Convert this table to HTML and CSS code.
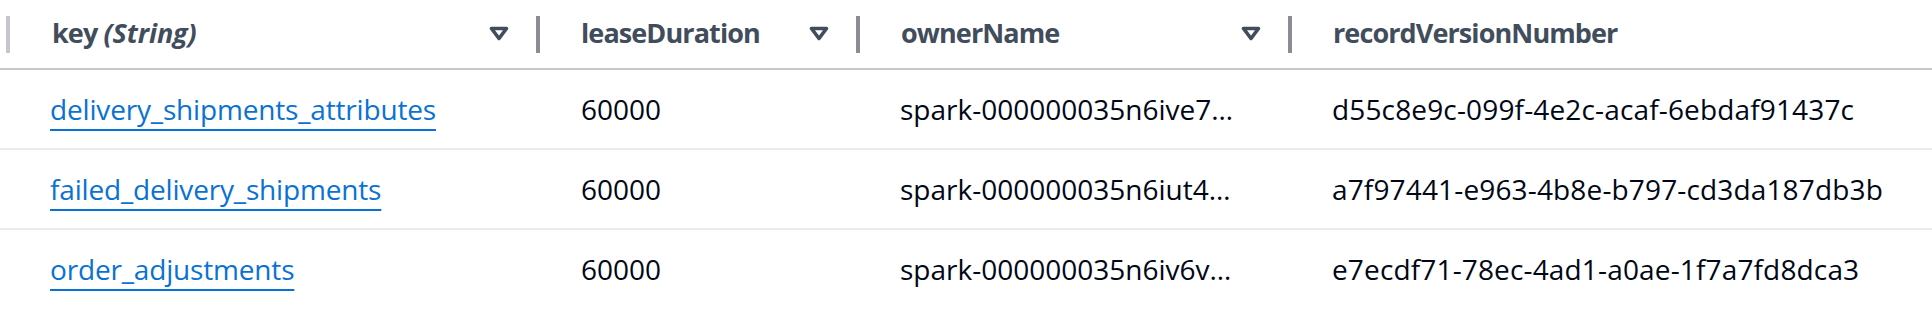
FILE: index.html
```html
<!DOCTYPE html>
<html lang="en">
<head>
<meta charset="utf-8">
<title>Items</title>
<link rel="stylesheet" href="styles.css">
</head>
<body>
<table class="grid">
  <colgroup>
    <col class="c1"><col class="c2"><col class="c3"><col class="c4">
  </colgroup>
  <thead>
    <tr>
      <th class="h1">
        <div class="th">
          <span class="rule rule-light"></span>
          <span class="label">key <em>(String)</em></span>
          <svg class="caret" viewBox="0 0 20 16" aria-hidden="true"><path d="M2.5 2.5H17.5L10 12.5Z"/></svg>
        </div>
      </th>
      <th>
        <div class="th">
          <span class="rule"></span>
          <span class="label">leaseDuration</span>
          <svg class="caret" viewBox="0 0 20 16" aria-hidden="true"><path d="M2.5 2.5H17.5L10 12.5Z"/></svg>
        </div>
      </th>
      <th>
        <div class="th">
          <span class="rule"></span>
          <span class="label">ownerName</span>
          <svg class="caret" viewBox="0 0 20 16" aria-hidden="true"><path d="M2.5 2.5H17.5L10 12.5Z"/></svg>
        </div>
      </th>
      <th>
        <div class="th">
          <span class="rule"></span>
          <span class="label">recordVersionNumber</span>
        </div>
      </th>
    </tr>
  </thead>
  <tbody>
    <tr>
      <td class="d1"><a href="#">delivery_shipments_attributes</a></td>
      <td class="d2">60000</td>
      <td class="d3"><span class="trunc">spark-000000035n6ive7…</span></td>
      <td class="d4">d55c8e9c-099f-4e2c-acaf-6ebdaf91437c</td>
    </tr>
    <tr>
      <td class="d1"><a href="#">failed_delivery_shipments</a></td>
      <td class="d2">60000</td>
      <td class="d3"><span class="trunc">spark-000000035n6iut4…</span></td>
      <td class="d4">a7f97441-e963-4b8e-b797-cd3da187db3b</td>
    </tr>
    <tr class="last">
      <td class="d1"><a href="#">order_adjustments</a></td>
      <td class="d2">60000</td>
      <td class="d3"><span class="trunc">spark-000000035n6iv6v…</span></td>
      <td class="d4">e7ecdf71-78ec-4ad1-a0ae-1f7a7fd8dca3</td>
    </tr>
  </tbody>
</table>
</body>
</html>
```

FILE: styles.css
```css
html, body {
  margin: 0;
  padding: 0;
  background: #ffffff;
}

body {
  font-family: "Open Sans", "Noto Sans", "Liberation Sans", sans-serif;
  color: #000716;
}

.grid {
  width: 1932px;
  table-layout: fixed;
  border-collapse: collapse;
  border-spacing: 0;
}

.c1 { width: 536px; }
.c2 { width: 320px; }
.c3 { width: 432px; }
.c4 { width: auto; }

th {
  padding: 0;
  height: 68px;
  border-bottom: 2px solid #c6c6cd;
  text-align: left;
  vertical-align: middle;
}

.th {
  display: flex;
  align-items: center;
  height: 68px;
  font-size: 27px;
  font-weight: 700;
  letter-spacing: -0.9px;
  color: #414d5c;
}

.h1 .th {
  padding-left: 6px;
}

.rule {
  flex: none;
  width: 4px;
  height: 37px;
  background: #8c8c94;
}

.rule-light {
  background: #c6c6cd;
}

.label {
  margin-left: 41px;
  margin-bottom: 3px;
  white-space: nowrap;
}

.h1 .label {
  margin-left: 42px;
}

.label em {
  font-style: italic;
  letter-spacing: -0.1px;
}

.caret {
  flex: none;
  width: 20px;
  height: 16px;
  margin-left: auto;
  margin-right: 27px;
  fill: none;
  stroke: #414d5c;
  stroke-width: 3.6;
  stroke-linejoin: round;
}

td {
  height: 78px;
  padding: 0 44px 0 44px;
  border-bottom: 2px solid #e9ebed;
  font-size: 28px;
  color: #000716;
  white-space: nowrap;
  overflow: hidden;
  vertical-align: middle;
}

tr.last td {
  border-bottom: none;
}

td.d1 { padding-left: 50px; }
td.d2 { padding-left: 45px; }
td.d3 { padding-left: 44px; }
td.d4 { padding-left: 44px; letter-spacing: 0.15px; }

td a {
  color: #0972d3;
  letter-spacing: -0.17px;
  text-decoration: underline;
  text-decoration-thickness: 2px;
  text-underline-offset: 9px;
}

.trunc {
  display: block;
  overflow: hidden;
  text-overflow: ellipsis;
}
```
